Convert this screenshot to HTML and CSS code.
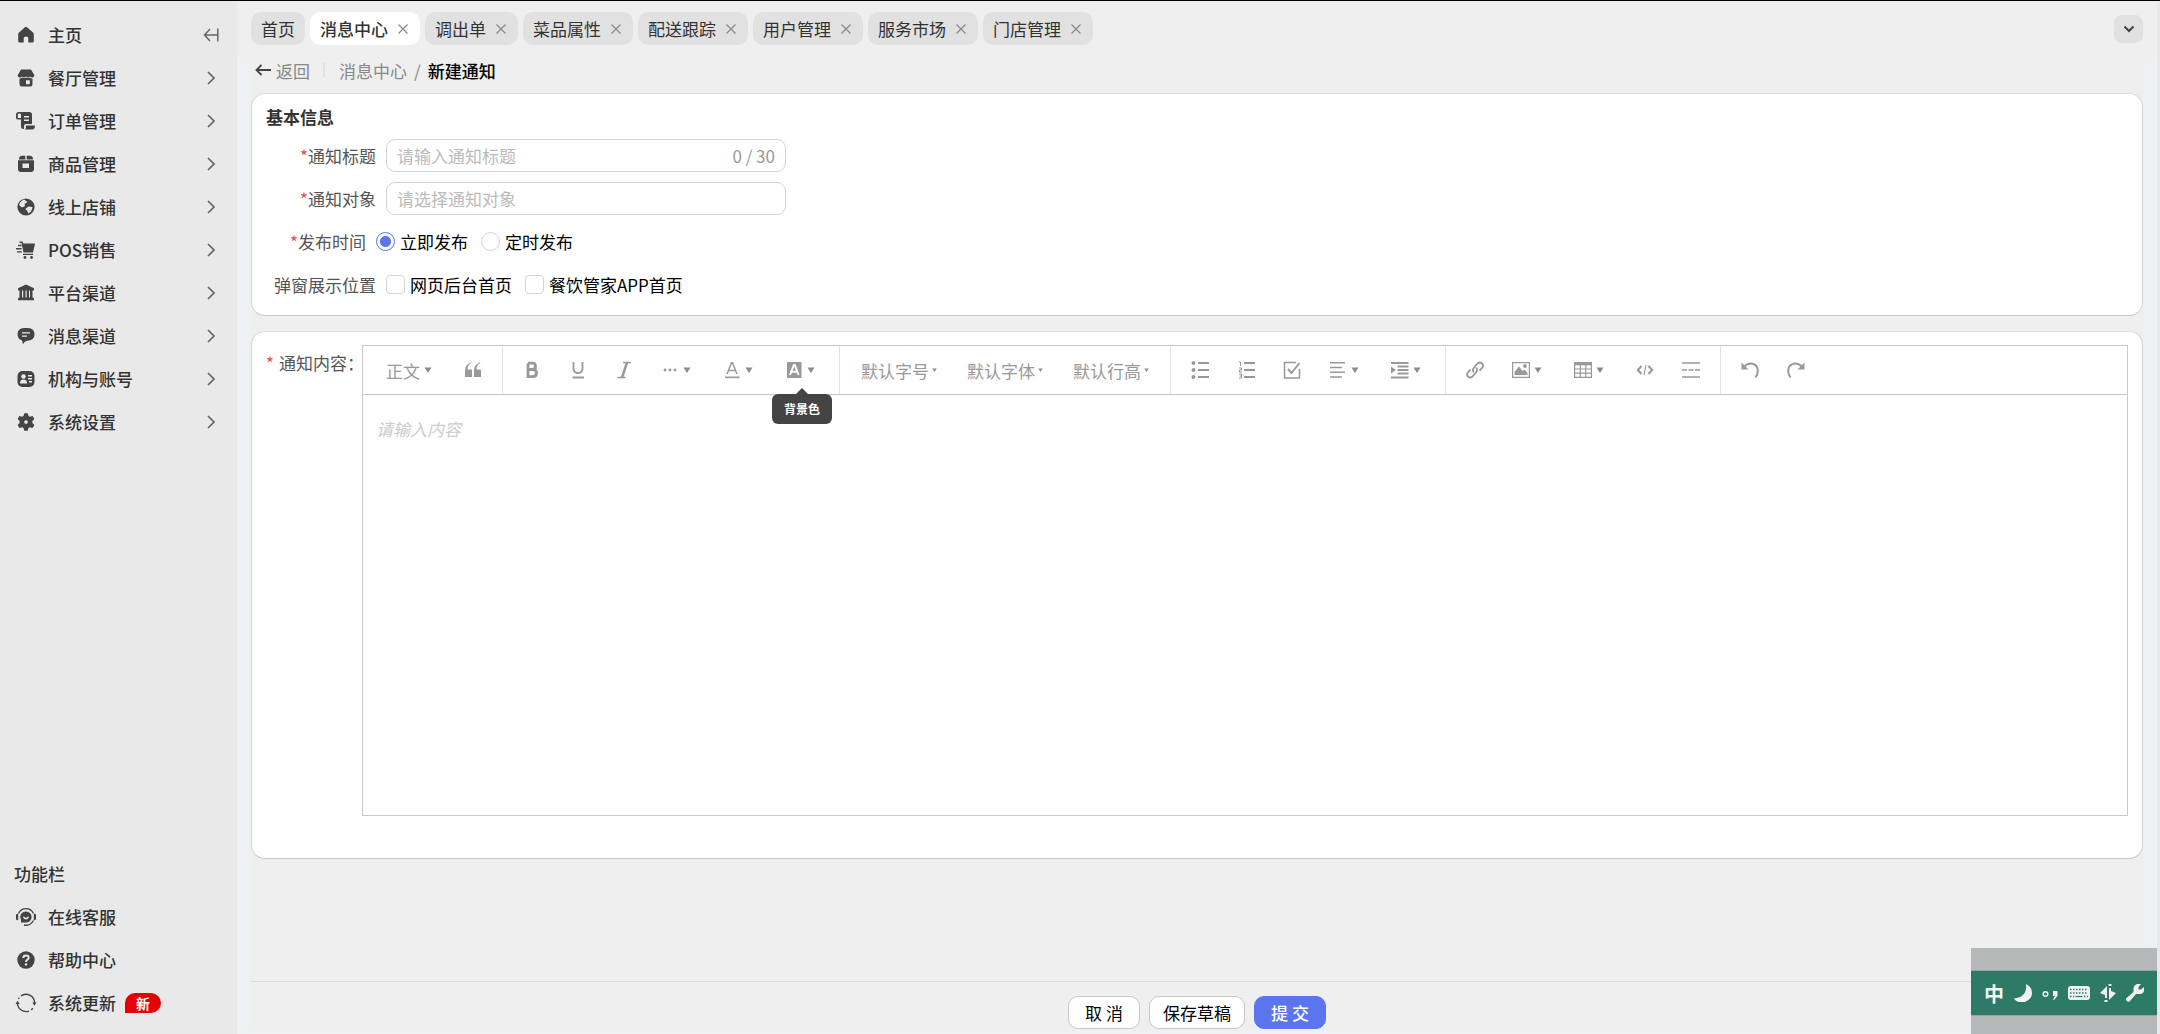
FILE: index.html
```html
<!DOCTYPE html>
<html lang="zh-CN">
<head>
<meta charset="utf-8">
<title>新建通知</title>
<link rel="stylesheet" href="styles.css">
</head>
<body>
<svg class="sprite" aria-hidden="true">
  <symbol id="chev" viewBox="0 0 8 14"><path d="M1 1l6 6-6 6" fill="none" stroke="#666" stroke-width="1.700"/></symbol>
  <symbol id="close" viewBox="0 0 12 12"><path d="M1.500 1.500l9 9M10.500 1.500l-9 9" fill="none" stroke="#888" stroke-width="1.200"/></symbol>
  <symbol id="caret" viewBox="0 0 8 6"><path d="M.5.500h7L4 6z" fill="#8c8c8c"/></symbol>
</svg>
<div class="shell">
  <nav class="sidebar">
    <ul class="menu">
      <li class="menu-row"><a class="menu-link" href="#"><svg class="ico" viewBox="0 0 18 18"><path d="M9 .8Q9.700.8 10.300 1.400L16 6.500Q16.800 7.200 16.800 8.300V15Q16.800 16.600 15.200 16.600H11.300V12Q11.300 10.500 9 10.500T6.700 12V16.600H2.800Q1.200 16.600 1.200 15V8.300Q1.200 7.200 2 6.500L7.700 1.400Q8.300.8 9 .8z"/></svg>主页</a><button class="fold" aria-label="收起菜单"><svg width="16" height="14" viewBox="0 0 16 14"><path d="M7 1L1.500 7 7 13M1.500 7h13M14.800.5v13" fill="none" stroke="#666" stroke-width="1.500"/></svg></button></li>
      <li class="menu-row"><a class="menu-link" href="#"><svg class="ico" viewBox="0 0 18 18"><path d="M4 0.500h10l3.500 6a2.500 2.500 0 0 1-4.500 1 2.700 2.700 0 0 1-4 0 2.700 2.700 0 0 1-4 0 2.500 2.500 0 0 1-4.500-1z"/><path fill-rule="evenodd" d="M2.500 9.500q2 0 3-1 1.700 1 3.500 0 1.800 1 3.500 0 1 1 3 1V15q0 2.500-2 2.500h-9q-2 0-2-2.500zM9 11.300v4h3.800v-4z"/></svg>餐厅管理</a><svg class="chev"><use href="#chev"/></svg></li>
      <li class="menu-row"><a class="menu-link" href="#"><svg class="ico" viewBox="0 0 18 18"><path fill-rule="evenodd" d="M2 0H12q3 0 3 2.500V12H9q-2 0-2 2v3H6.500Q4 17 4 15V7.500H1.500Q-1 7.500-1 6V2.500Q-1 0 2 0zM.8 2.500V6H4V2.500q0-1-1.500-1T.8 2.500zM7 4v1.500h5V4zM7 7.500V9h5V7.500z"/><path d="M9 13.500h9q0 4-3 4H7.500Q9 17 9 15z"/></svg>订单管理</a><svg class="chev"><use href="#chev"/></svg></li>
      <li class="menu-row"><a class="menu-link" href="#"><svg class="ico" viewBox="0 0 18 18"><path d="M5 .8H8.300V4.500H2q0-3.700 3-3.700zM9.700.8H13q3 0 3 3.700H9.700z"/><path fill-rule="evenodd" d="M1 5.300H17V14q0 3-3 3H4q-3 0-3-3zM5.500 8.500v4.500h6.500V8.500z"/></svg>商品管理</a><svg class="chev"><use href="#chev"/></svg></li>
      <li class="menu-row"><a class="menu-link" href="#"><svg class="ico" viewBox="0 0 18 18"><circle cx="9" cy="9" r="8.600"/><path fill="#e9e9e9" d="M7 1.500L10.500 4 7.500 6 8 8 5 9.500 2 7Q3 3 7 1.500zM11.500 8.500l4 .5q-.5 4.500-4 6.500l-1.500-3-1.700-1.500z"/></svg>线上店铺</a><svg class="chev"><use href="#chev"/></svg></li>
      <li class="menu-row"><a class="menu-link" href="#"><svg class="ico" viewBox="0 0 18 18"><path d="M2.500.5H5.500L6.300 2.500H18L16 11.500H6.500L4.500 2H2.500zM6 12.800H16V14H6zM1 3.800H4.500V5.200H1zM-1 7H4.500V8.400H-1zM0 10.200H5V11.600H0z"/><circle cx="8" cy="16.500" r="1.400"/><circle cx="14.500" cy="16.500" r="1.400"/></svg>POS销售</a><svg class="chev"><use href="#chev"/></svg></li>
      <li class="menu-row"><a class="menu-link" href="#"><svg class="ico" viewBox="0 0 18 18"><path d="M9 .5L17 4.300V6.500H1V4.300zM2.500 6H5V14H2.500zM6.200 6H8.500V14H6.200zM9.700 6H12V14H9.700zM13 6H15.500V14H13zM2 13.500H16L17 14.500V16.300H1V14.500z"/></svg>平台渠道</a><svg class="chev"><use href="#chev"/></svg></li>
      <li class="menu-row"><a class="menu-link" href="#"><svg class="ico" viewBox="0 0 18 18"><path fill-rule="evenodd" d="M7 1H11Q17.500 1.500 17.500 7.300T11 13.800H10Q7 14.500 6 17.300L5 13.500Q.5 12 .5 7.300.500 1.500 7 1zM5 5.200V6.600H13V5.200zM5 8.400V9.800H10V8.400z"/></svg>消息渠道</a><svg class="chev"><use href="#chev"/></svg></li>
      <li class="menu-row"><a class="menu-link" href="#"><svg class="ico" viewBox="0 0 18 18"><rect x=".5" y="1" width="17" height="16" rx="5"/><g fill="#e9e9e9"><circle cx="6.500" cy="6.500" r="2.300"/><path d="M3 12.500Q3.300 9.500 6.500 9.500T10 12.500V13.500H3zM11 5h4v1.500h-4zM11 8h4v1.500h-4zM12 11h3v1.500h-3z"/></g></svg>机构与账号</a><svg class="chev"><use href="#chev"/></svg></li>
      <li class="menu-row"><a class="menu-link" href="#"><svg class="ico" viewBox="0 0 18 18"><path fill-rule="evenodd" d="M7.300.3h3.400L11.500 3l1.200.7 2.900-.7 1.800 3-2 2.100v1.800l2 2.100-1.800 3-2.900-.7-1.200.7-.8 2.700H7.300L6.500 15l-1.200-.7-2.900.7-1.800-3 2-2.100V8.100l-2-2.100 1.800-3 2.900.7L6.500 3zM9 7.200a1.800 1.800 0 1 0 .01 0z"/></svg>系统设置</a><svg class="chev"><use href="#chev"/></svg></li>
    </ul>
    <div class="tools">
      <h2 class="tools-title">功能栏</h2>
      <ul class="menu">
        <li class="menu-row"><a class="menu-link" href="#"><svg class="ico" viewBox="0 0 18 18"><path fill="none" stroke="#444" stroke-width="1.300" d="M1.500 5.500A8.200 8.200 0 0 1 16.500 5.500M16.500 12.500A8.200 8.200 0 0 1 7 17"/><path d="M-1 6.500l2.200-1v7L-1 11.500zM19 6.500l-2.200-1v7l2.200-1z"/><path fill-rule="evenodd" d="M9 3.400A5.600 5.600 0 1 1 9 14.600H4V12A5.600 5.600 0 0 1 9 3.400zM5.800 9Q9 14 12.200 9L11 8.500Q9 11 7 8.500z"/></svg>在线客服</a></li>
        <li class="menu-row"><a class="menu-link" href="#"><svg class="ico" viewBox="0 0 18 18"><circle cx="9" cy="9" r="8.700"/><path d="M6.300 7Q6.300 4.500 9 4.500T11.700 6.800Q11.700 8 10.200 8.900 9 9.600 9 11" fill="none" stroke="#e9e9e9" stroke-width="1.900"/><circle cx="9" cy="13.400" r="1.200" fill="#e9e9e9"/></svg>帮助中心</a></li>
        <li class="menu-row"><a class="menu-link" href="#"><svg class="ico" viewBox="0 0 18 18"><path fill="none" stroke="#444" stroke-width="1.400" d="M4 1.900A8.600 8.600 0 0 1 17.500 9.500M14.200 15.900A8.600 8.600 0 0 0 15.800 14.300M12 17.100A8.600 8.600 0 0 1 .5 9M1.500 4.800A8.600 8.600 0 0 1 2.300 3.600"/><path d="M15.300 8.500H19.500L17.400 11.800zM-1.500 10L.5 6.700 2.700 10z"/></svg>系统更新<span class="badge">新</span></a></li>
      </ul>
    </div>
  </nav>

  <div class="main">
    <header class="tabs">
      <a class="tab plain" href="#">首页</a>
      <div class="tab on"><a href="#">消息中心</a><button class="x" aria-label="关闭"><svg><use href="#close"/></svg></button></div>
      <div class="tab"><a href="#">调出单</a><button class="x" aria-label="关闭"><svg><use href="#close"/></svg></button></div>
      <div class="tab"><a href="#">菜品属性</a><button class="x" aria-label="关闭"><svg><use href="#close"/></svg></button></div>
      <div class="tab"><a href="#">配送跟踪</a><button class="x" aria-label="关闭"><svg><use href="#close"/></svg></button></div>
      <div class="tab"><a href="#">用户管理</a><button class="x" aria-label="关闭"><svg><use href="#close"/></svg></button></div>
      <div class="tab"><a href="#">服务市场</a><button class="x" aria-label="关闭"><svg><use href="#close"/></svg></button></div>
      <div class="tab"><a href="#">门店管理</a><button class="x" aria-label="关闭"><svg><use href="#close"/></svg></button></div>
      <button class="more" aria-label="更多标签"><svg width="12" height="8" viewBox="0 0 12 8"><path d="M1.500 1.500L6 6l4.500-4.500" fill="none" stroke="#444" stroke-width="2"/></svg></button>
    </header>

    <div class="page">
      <div class="content">
        <div class="crumbs">
          <a class="back" href="#"><svg width="16" height="12" viewBox="0 0 16 12"><path d="M6.500 1L1.500 6l5 5M1.500 6H16" fill="none" stroke="#444" stroke-width="1.800"/></svg>返回</a>
          <span class="bar"></span>
          <a href="#">消息中心</a><span class="slash">/</span><strong>新建通知</strong>
        </div>

        <section class="card basic">
          <h1>基本信息</h1>
          <div class="row">
            <label class="name" for="title"><i>*</i>通知标题</label>
            <div class="box"><input id="title" type="text" placeholder="请输入通知标题"><span class="count">0 / 30</span></div>
          </div>
          <div class="row">
            <label class="name" for="target"><i>*</i>通知对象</label>
            <div class="box"><input id="target" type="text" placeholder="请选择通知对象"></div>
          </div>
          <div class="row">
            <span class="name short"><i>*</i>发布时间</span>
            <label class="opt"><input type="radio" name="when" checked>立即发布</label>
            <label class="opt"><input type="radio" name="when">定时发布</label>
          </div>
          <div class="row">
            <span class="name">弹窗展示位置</span>
            <label class="opt"><input type="checkbox">网页后台首页</label>
            <label class="opt"><input type="checkbox">餐饮管家APP首页</label>
          </div>
        </section>

        <section class="card compose">
          <label class="compose-name" for="body"><i>*</i>通知内容：</label>
          <div class="editor">
            <div class="toolbar">
              <div class="group">
                <button class="tb text">正文<svg class="caret"><use href="#caret"/></svg></button>
                <button class="tb" aria-label="引用"><svg viewBox="0 0 18 18"><path d="M7.500 2Q3.500 3.500 3.500 8.500H8V16H1V9Q1 3.500 7 1.500zM16.500 2Q12.500 3.500 12.500 8.500H17V16H10V9Q10 3.500 16 1.500z"/></svg></button>
              </div>
              <div class="group">
                <button class="tb" aria-label="粗体"><svg viewBox="0 0 18 18"><path class="ln" stroke-width="2.800" d="M5 2.200H9.500Q12.500 2.200 12.500 5.200T9.500 8.500H5M5 8.500H10Q13.500 8.500 13.500 12T10 15.600H5zV2.200"/></svg></button>
                <button class="tb" aria-label="下划线"><svg viewBox="0 0 18 18"><path class="ln" d="M4.500 1V7.500Q4.500 12 9 12T13.500 7.500V1M3.500 16.500H15" stroke-width="1.800"/></svg></button>
                <button class="tb" aria-label="斜体"><svg viewBox="0 0 18 18"><path class="ln" d="M8 1.500H16M2.500 16.500H10.500" stroke-width="1.400"/><path class="ln" d="M12 1.500L7 16.500" stroke-width="2.500"/></svg></button>
                <button class="tb drop" aria-label="更多"><svg viewBox="0 0 18 18"><circle cx="4" cy="9" r="1.400"/><circle cx="9" cy="9" r="1.400"/><circle cx="14" cy="9" r="1.400"/></svg><svg class="caret"><use href="#caret"/></svg></button>
                <button class="tb drop" aria-label="文字颜色"><svg viewBox="0 0 18 18"><path class="ln" d="M4 13L8.500 1.800h1L14 13M5.500 9.500h7" stroke-width="1.500"/><path d="M2 15.500H16.500V17.200H2z"/></svg><svg class="caret"><use href="#caret"/></svg></button>
                <button class="tb drop" aria-label="背景色"><svg viewBox="0 0 18 18"><path d="M2 1H16.500V17H2z"/><path d="M5 14L8.800 4h1L13.600 14M6.500 10.800h6" fill="none" stroke="#fff" stroke-width="2"/></svg><svg class="caret"><use href="#caret"/></svg><span class="tip">背景色</span></button>
              </div>
              <div class="group">
                <button class="tb font">默认字号<svg class="caret"><use href="#caret"/></svg></button>
                <button class="tb font">默认字体<svg class="caret"><use href="#caret"/></svg></button>
                <button class="tb font">默认行高<svg class="caret"><use href="#caret"/></svg></button>
              </div>
              <div class="group">
                <button class="tb" aria-label="无序列表"><svg viewBox="0 0 18 18"><circle cx="2.500" cy="2" r="2"/><circle cx="2.500" cy="9" r="2"/><circle cx="2.500" cy="16" r="2"/><path class="ln" d="M7 2H18M7 9H18M7 16H18" stroke-width="2"/></svg></button>
                <button class="tb" aria-label="有序列表"><svg viewBox="0 0 18 18"><path class="ln" d="M7 2H18M7 9H18M7 16H18" stroke-width="2"/><path class="ln" stroke-width="1" d="M2 1H3.500V5M2 7H4.500V9H2.500V11H5M2 13H4.500V17H2M2.500 15h2"/></svg></button>
                <button class="tb" aria-label="待办"><svg viewBox="0 0 18 18"><path class="ln" d="M13 1.500H1.500V17H16.500V8" stroke-width="1.500"/><path class="ln" d="M5 8L8.500 12L16.500 2" stroke-width="2"/></svg></button>
                <button class="tb drop" aria-label="对齐"><svg viewBox="0 0 18 18"><path class="ln" d="M1 1.800H16M1 6.500H13M1 11.300H16M1 16H13" stroke-width="1.500"/></svg><svg class="caret"><use href="#caret"/></svg></button>
                <button class="tb drop" aria-label="缩进"><svg viewBox="0 0 18 18"><path d="M0 5.500L5 9 0 12.500z"/><path class="ln" d="M0 2H17.500M6.500 5.500h11M6.500 9h11M6.500 12.500h11M0 16.500H17.500" stroke-width="1.900"/></svg><svg class="caret"><use href="#caret"/></svg></button>
              </div>
              <div class="group">
                <button class="tb" aria-label="链接"><svg viewBox="0 0 18 18"><path class="ln" stroke-width="1.800" d="M8 11.500Q5.800 9 8 6.500L11.500 2.500Q14 .5 16 2.500T16 7L13.500 9.500M10 6.500Q12.200 9 10 11.500L6.500 15.500Q4 17.500 2 15.500T2 11L4.500 8.500"/></svg></button>
                <button class="tb drop" aria-label="图片"><svg viewBox="0 0 18 18"><path class="ln" stroke-width="1.200" d="M.6 1.600H17.400V16.400H.6z"/><circle cx="13" cy="5" r="1.900"/><path d="M2.500 14V11L7 5.500 10.500 10 12.500 8.500 15.500 12V14z"/></svg><svg class="caret"><use href="#caret"/></svg></button>
                <button class="tb drop" aria-label="表格"><svg viewBox="0 0 18 18"><path class="ln" stroke-width="1.200" d="M.6 1.600H17.400V16.400H.6zM.6 8H17.400M.6 12.200H17.400M6.300 4V16.400M11.800 4V16.400"/><path d="M0 1H18V4.300H0z"/></svg><svg class="caret"><use href="#caret"/></svg></button>
                <button class="tb" aria-label="代码块"><svg viewBox="0 0 18 18"><path class="ln" stroke-width="2" d="M5.500 5L1.800 9l3.700 4M12.500 5l3.700 4-3.700 4"/><path class="ln" stroke-width="1.200" d="M10 4L8 14"/></svg></button>
                <button class="tb" aria-label="分割线"><svg viewBox="0 0 18 18"><path class="ln" stroke-width="1.600" d="M0 2H18M0 9H5M6.500 9h5M13 9h5M0 16H18"/></svg></button>
              </div>
              <div class="group">
                <button class="tb" aria-label="撤销"><svg viewBox="0 0 18 18"><path class="ln" stroke-width="2" d="M3 6Q6 2 10.500 2.500 16.500 3.500 16.800 9.500 17 13 14.500 16.500"/><path d="M.5 1.500V8.500H7.500z"/></svg></button>
                <button class="tb" aria-label="重做"><svg viewBox="0 0 18 18"><path class="ln" stroke-width="2" d="M15 6Q12 2 7.500 2.500 1.500 3.500 1.200 9.500 1 13 3.500 16.500"/><path d="M17.500 1.500V8.500H10.500z"/></svg></button>
              </div>
            </div>
            <textarea id="body" placeholder="请输入内容"></textarea>
          </div>
        </section>

        <footer class="actions">
          <button class="btn">取 消</button>
          <button class="btn">保存草稿</button>
          <button class="btn primary">提 交</button>
        </footer>
      </div>
    </div>
  </div>
</div>

<div class="ime">
  <div class="ime-bar">
    <span>中</span>
    <svg width="18" height="18" viewBox="0 0 18 18"><path d="M12 0Q18 3 18 9T11 18H5Q1 17 0 14 5 15 9 11T12 0z"/></svg>
    <svg width="16" height="18" viewBox="0 0 16 18"><circle cx="3.500" cy="10" r="2.300" fill="none" stroke="#f2f2f2" stroke-width="1.500"/><path d="M11 7h4.500v5L12 16l-1-.5 2-3.500h-2z"/></svg>
    <svg width="22" height="14" viewBox="0 0 22 14"><rect width="22" height="14" rx="3"/><path d="M2 3.500H20M2 7H20M2 10.500H6M16 10.500H20" stroke="#2d7a66" stroke-width="1.500" stroke-dasharray="1.500 1.500"/><path d="M7.500 10.500h7" stroke="#2d7a66" stroke-width="1.200"/></svg>
    <svg width="16" height="18" viewBox="0 0 16 18"><path d="M7 2V14H5V11L0 9zM9 16V4h2v3l5 2zM8.500 0h3v2h-3zM4.500 16h3v2h-3z"/></svg>
    <svg width="18" height="18" viewBox="0 0 18 18"><path d="M11 0h4L12.500 3v2.500H15L18 3V7Q17 10.500 13 10L10 10 3.500 17.500Q1 18.500 0 15.500V14.500L7.500 8V4Q8 1 11 0z"/></svg>
  </div>
</div>
</body>
</html>
```
FILE: styles.css
```css
* { box-sizing: border-box; }

body {
  margin: 0;
  font: 400 17px/25px "Noto Sans CJK SC", sans-serif;
  color: #333;
  background: #e9e9e9;
}

a { color: inherit; text-decoration: none; }
ul { margin: 0; padding: 0; list-style: none; }
h1, h2 { margin: 0; font-size: 17px; }
button { margin: 0; padding: 0; border: 0; background: none; font: inherit; color: inherit; cursor: pointer; }
svg { flex: none; }
i { font-style: normal; color: #f04848; }
.sprite { display: none; }

.shell {
  display: flex;
  min-height: 100vh;
  border-top: 1px solid #000;
}

/* Sidebar */
.sidebar {
  flex: none;
  display: flex;
  flex-direction: column;
  justify-content: space-between;
  width: 237px;
  padding: 12px 18px 10px 17px;
  background: #e9e9e9;
  font-weight: 500;
}
.menu-row { display: flex; align-items: center; justify-content: space-between; height: 43px; }
.menu-link { display: flex; align-items: center; gap: 13px; }
.ico { width: 18px; height: 18px; fill: #444; overflow: visible; }
.chev { width: 8px; height: 14px; margin-right: 4px; }
.fold { display: flex; }
.tools-title { margin-left: -3px; line-height: 43px; font-weight: 500; }
.badge {
  margin-left: -4px;
  padding: 0 11px;
  border-radius: 10px 10px 10px 0;
  background: #e60000;
  color: #fff;
  font-size: 14px;
  font-weight: 700;
  line-height: 20px;
}

/* Tab strip */
.main {
  flex: 1;
  min-width: 0;
  display: flex;
  flex-direction: column;
  border-right: 3px solid #e8e8e8;
  background: #eff0f3;
}
.tabs { display: flex; align-items: center; gap: 5px; height: 56px; padding: 0 14px 1px; background: #efefef; }
.tab {
  display: flex;
  align-items: center;
  gap: 9px;
  height: 33px;
  padding: 0 11px 0 10px;
  border-radius: 10px;
  background: #e1e1e1;
}
.tab.plain { padding: 0 10px; }
.tab.on { background: #fff; font-weight: 500; }
.x { display: flex; }
.x svg { width: 12px; height: 12px; }
.more {
  display: flex;
  align-items: center;
  justify-content: center;
  width: 29px;
  height: 28px;
  margin-left: auto;
  border-radius: 8px;
  background: #e1e1e1;
}

/* Page */
.page { flex: 1; display: flex; padding: 0 14px 5px; }
.content { flex: 1; min-width: 0; display: flex; flex-direction: column; background: #efefef; }
.crumbs { display: flex; align-items: center; height: 36px; padding: 0 4px 10px; color: #888; }
.back { display: flex; align-items: center; gap: 5px; }
.bar { width: 2px; height: 14px; margin: 0 14px 0 13px; background: #e1e1e1; }
.slash { margin: 0 7px; }
.crumbs strong { font-weight: 500; color: #000; }

.card {
  border: 1px solid #d4d4d4;
  border-top-color: #dedede;
  border-bottom-color: #c8c8c8;
  border-radius: 14px;
  background: #fff;
}
.basic { padding: 10px 14px 9px; }
.basic h1 { margin-bottom: 4px; line-height: 26px; }
.row { display: flex; align-items: center; height: 43px; color: #000; }
.name { width: 110px; margin-right: 10px; text-align: right; color: #555; }
.name.short { width: 100px; }
.box {
  display: flex;
  align-items: center;
  width: 400px;
  height: 33px;
  padding: 0 10px;
  border: 1px solid #d4d4d4;
  border-radius: 9px;
  background: #fff;
}
.box input { flex: 1; min-width: 0; padding: 0; border: 0; outline: 0; background: none; font: inherit; }
::placeholder { color: #bbb; opacity: 1; }
.count { color: #999; }
.opt { display: flex; align-items: center; gap: 5px; margin-right: 13px; }
.opt input {
  appearance: none;
  width: 19px;
  height: 19px;
  margin: 0;
  border: 1px solid #d4d4d4;
  border-radius: 4px;
  background: #fff;
}
.opt input[type="radio"] { border-radius: 50%; }
.opt input[type="radio"]:checked {
  border-color: #5b75f0;
  background: radial-gradient(circle, #5b75f0 5px, #fff 6px);
}

/* Editor */
.compose { display: flex; align-items: flex-start; margin-top: 15px; padding: 13px 14px 42px; }
.compose-name { flex: none; display: flex; gap: 5px; width: 96px; padding-top: 5px; color: #555; white-space: nowrap; }
.editor { flex: 1; min-width: 0; border: 1px solid #c8c8c8; }
.toolbar { display: flex; flex-wrap: wrap; border-bottom: 1px solid #c8c8c8; color: #999; }
.group { display: flex; height: 48px; padding: 0 6px; border-right: 1px solid #e3e3e3; }
.group:last-child { border: 0; }
.tb { position: relative; display: flex; align-items: center; padding: 0 14px; }
.tb svg { width: 18px; height: 18px; fill: #999; }
.tb svg.caret { width: 8px; height: 6px; }
.tb .ln { fill: none; stroke: #999; }
.tb.drop { gap: 4px; padding-right: 18px; }
.tb.text { gap: 4px; padding: 0 18px 0 17px; }
.tb.font { gap: 3px; padding: 0 15px; }
.tb.font svg.caret { width: 5px; height: 4px; }
.tip {
  position: absolute;
  top: 48px;
  left: 50%;
  z-index: 1;
  padding: 5px 12px;
  border-radius: 6px;
  background: #444;
  color: #fff;
  font-size: 12px;
  font-weight: 700;
  white-space: nowrap;
  transform: translateX(-50%);
}
.tip::before {
  content: "";
  position: absolute;
  left: 50%;
  bottom: 100%;
  margin-left: -6px;
  border: 6px solid transparent;
  border-top: 0;
  border-bottom-color: #444;
}
textarea {
  display: block;
  width: 100%;
  min-height: 420px;
  padding: 21px 13px;
  border: 0;
  outline: 0;
  resize: none;
  background: none;
  font: inherit;
}
textarea::placeholder { color: #ccc; font-style: italic; }
.tip { line-height: 20px; }

/* Action bar */
.actions {
  display: flex;
  justify-content: center;
  gap: 9px;
  margin-top: auto;
  padding-top: 14px;
  border-top: 1px solid #dcdcdc;
}
.btn {
  min-width: 72px;
  height: 33px;
  padding: 0 13px;
  border: 1px solid #c8c8c8;
  border-radius: 10px;
  background: #fff;
  color: #000;
}
.btn.primary { border-color: #5b75f0; background: #5b75f0; color: #fff; font-weight: 500; }

/* Input method bar floating over the page */
.ime { position: fixed; right: 3px; bottom: 0; padding: 22px 0 18px; background: #b4b8b8; }
.ime-bar {
  display: flex;
  align-items: center;
  gap: 10px;
  height: 46px;
  padding: 0 13px;
  border: 1px solid #9aa5a2;
  border-width: 1px 0;
  background: #2d7a66;
  color: #f2f2f2;
  font-size: 20px;
  font-weight: 700;
}
.ime svg { fill: #f2f2f2; }
```
